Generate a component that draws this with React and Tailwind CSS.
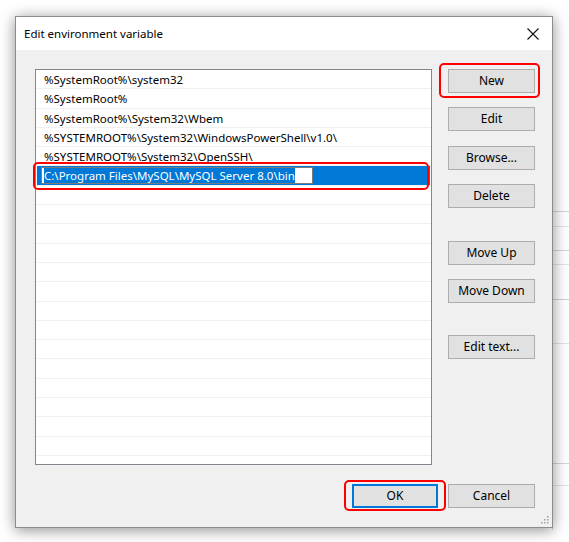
import React from "react";

const rows = [
  "%SystemRoot%\\system32",
  "%SystemRoot%",
  "%SystemRoot%\\System32\\Wbem",
  "%SYSTEMROOT%\\System32\\WindowsPowerShell\\v1.0\\",
  "%SYSTEMROOT%\\System32\\OpenSSH\\",
];

function Btn({ children, className = "" }) {
  return (
    <div
      className={
        "h-[24px] w-[87px] flex items-center justify-center bg-[#e1e1e1] border border-[#adadad] text-[12px] text-black " +
        className
      }
    >
      {children}
    </div>
  );
}

export default function App() {
  const empty = Array.from({ length: 15 });
  return (
    <div
      className="relative w-[569px] h-[542px] bg-white overflow-hidden"
      style={{ fontFamily: '"Noto Sans", "Open Sans", sans-serif' }}
    >
      {/* background window hints */}
      <div className="absolute left-[552px] top-[60px] w-[17px] h-[470px] border-l border-[#d9d9d9]">
        <div className="h-[152px] border-b border-[#d6d6d6]" />
        <div className="h-[15px] border-b border-[#e3e3e3]" />
        <div className="h-[24px] border-b border-[#d6d6d6]" />
        <div className="h-[14px] border-b border-[#e3e3e3]" />
        <div className="h-[35px] border-b border-[#cfcfcf]" />
        <div className="h-[44px] border-b border-[#e3e3e3]" />
        <div className="h-[120px] border-b border-[#d6d6d6]" />
        <div className="h-[22px] border-b border-[#e3e3e3]" />
      </div>

      <div className="pl-[15px] pt-[16px]">
        <div className="relative w-[538px] h-[512px] border border-[#8c8c8c] bg-[#f0f0f0] shadow-[0_2px_14px_rgba(0,0,0,0.45)] flex flex-col">
          {/* title bar */}
          <div className="h-[33px] bg-white flex items-center justify-between pl-[8px] pr-[13px]">
            <span className="text-[11.5px] text-black">Edit environment variable</span>
            <svg width="12" height="12" viewBox="0 0 12 12">
              <path d="M0.5 0.5 L11.5 11.5 M11.5 0.5 L0.5 11.5" stroke="#111" strokeWidth="1.1" />
            </svg>
          </div>

          {/* client */}
          <div className="flex-1 flex flex-col pl-[19px] pr-[17px] pt-[19px]">
            <div className="flex">
              {/* list */}
              <div className="w-[397px] h-[396px] bg-white border border-[#828790] overflow-hidden">
                {rows.map((r) => (
                  <div
                    key={r}
                    className="h-[19.3px] border-b border-[#f0f0f0] flex items-center pl-[8px] pt-[1px] text-[11.5px] text-black whitespace-nowrap"
                  >
                    {r}
                  </div>
                ))}
                <div className="h-[19.3px] border-b border-[#f0f0f0] px-[1px]">
                  <div className="h-full bg-[#0078d7] flex items-center pl-[4px]">
                    <div className="h-[17px] w-[272px] bg-white border border-[#7a7a7a] flex items-center pl-[2px]">
                      <span className="bg-[#0078d7] text-white text-[11.5px] leading-[15px] whitespace-nowrap">
                        C:\Program Files\MySQL\MySQL Server 8.0\bin
                      </span>
                    </div>
                  </div>
                </div>
                {empty.map((_, i) => (
                  <div key={i} className="h-[19.3px] border-b border-[#f0f0f0]" />
                ))}
              </div>

              {/* buttons */}
              <div className="ml-[16px] flex flex-col">
                <Btn>New</Btn>
                <Btn className="mt-[14px]">Edit</Btn>
                <Btn className="mt-[15px]">Browse...</Btn>
                <Btn className="mt-[14px]">Delete</Btn>
                <Btn className="mt-[33px]">Move Up</Btn>
                <Btn className="mt-[14px]">Move Down</Btn>
                <Btn className="mt-[32px]">Edit text...</Btn>
              </div>
            </div>

            <div className="mt-[19px] flex justify-end gap-[10px]">
              <div className="h-[24px] w-[86px] flex items-center justify-center bg-[#e1e1e1] border-2 border-[#0078d7] text-[12px] text-black">
                OK
              </div>
              <Btn className="w-[86px]">Cancel</Btn>
            </div>
          </div>

          {/* resize grip */}
          <svg className="absolute right-[3px] bottom-[3px]" width="9" height="9" viewBox="0 0 9 9">
            {[[7, 1], [7, 4], [4, 4], [7, 7], [4, 7], [1, 7]].map(([x, y], i) => (
              <rect key={i} x={x} y={y} width="1.5" height="1.5" fill="#a0a0a0" />
            ))}
          </svg>
        </div>
      </div>

      {/* red annotation outlines */}
      <div className="absolute left-[439px] top-[63px] w-[101px] h-[35px] border-2 border-[#ff0000] rounded-[5px]" />
      <div className="absolute left-[33px] top-[162px] w-[396px] h-[28px] border-2 border-[#ff0000] rounded-[5px]" />
      <div className="absolute left-[344px] top-[480px] w-[102px] h-[31px] border-2 border-[#ff0000] rounded-[5px]" />
    </div>
  );
}
